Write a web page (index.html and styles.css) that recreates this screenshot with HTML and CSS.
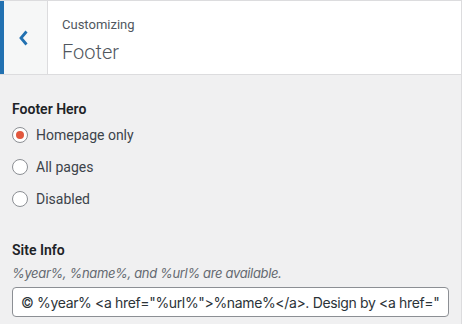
FILE: index.html
```html
<!DOCTYPE html>
<html lang="en">
<head>
    <meta charset="UTF-8">
    <title>Customizing Footer</title>
    <link rel="stylesheet" href="styles.css">
</head>
<body>
    <div class="panel">
        <div class="panel-header">
            <button class="back-btn" aria-label="Back">
                <svg width="10" height="16" viewBox="0 0 10 16"><path d="M7.5 1.5 L2 8 L7.5 14.5" fill="none" stroke="#2271b1" stroke-width="2.8"/></svg>
            </button>
            <div class="title">
                <span class="subtitle">Customizing</span>
                <h3>Footer</h3>
            </div>
        </div>

        <div class="section">
            <div class="control-title">Footer Hero</div>
            <label class="radio-row"><input type="radio" name="hero" checked> Homepage only</label>
            <label class="radio-row"><input type="radio" name="hero"> All pages</label>
            <label class="radio-row"><input type="radio" name="hero"> Disabled</label>
        </div>

        <div class="section site-info">
            <div class="control-title">Site Info</div>
            <p class="description">%year%, %name%, and %url% are available.</p>
            <input class="text-input" type="text" value='© %year% <a href="%url%">%name%</a>. Design by <a href="https://example.com">Studio</a>'>
        </div>
    </div>
</body>
</html>
```

FILE: styles.css
```css
body {
    margin: 0;
    font-family: Roboto, "Liberation Sans", sans-serif;
    background: #f0f0f1;
    color: #1d2327;
}
.panel {
    height: 324px;
    border-right: 1px solid #dcdcde;
    box-sizing: border-box;
    overflow: hidden;
}
.panel-header {
    display: flex;
    height: 75px;
    background: #fff;
    border-top: 1px solid #dcdcde;
    border-bottom: 1px solid #dcdcde;
    box-sizing: border-box;
}
.back-btn {
    width: 48px;
    border: none;
    border-left: 4px solid #2271b1;
    border-right: 1px solid #dcdcde;
    background: #f6f7f7;
    padding: 0 3px 0 0;
    display: flex;
    align-items: center;
    justify-content: center;
    cursor: pointer;
}
.title {
    padding: 14px 0 0 14px;
    color: #50575e;
}
.subtitle {
    display: block;
    font-size: 13px;
    line-height: 20px;
}
.title h3 {
    margin: 4px 0 0;
    font-size: 20px;
    font-weight: 300;
    line-height: 26px;
}
.section {
    padding: 0 12px;
}
.control-title {
    font-size: 14px;
    font-weight: 600;
    color: #1d2327;
    margin-top: 24px;
    line-height: 20px;
}
.radio-row {
    display: flex;
    align-items: center;
    font-size: 14px;
    color: #3c434a;
    height: 32px;
    gap: 8px;
}
.radio-row input {
    appearance: none;
    width: 16px;
    height: 16px;
    margin: 0;
    border: 1px solid #8c8f94;
    border-radius: 50%;
    background: #fff;
    display: flex;
    align-items: center;
    justify-content: center;
}
.radio-row input:checked::before {
    content: "";
    width: 8px;
    height: 8px;
    border-radius: 50%;
    background: #e2583e;
}
.site-info .control-title {
    margin-top: 25px;
}
.description {
    margin: 4px 0 5px;
    font-family: Inter, "Liberation Sans", sans-serif;
    font-size: 13px;
    font-style: italic;
    letter-spacing: -0.35px;
    color: #646970;
    line-height: 18px;
}
.text-input {
    width: 100%;
    box-sizing: border-box;
    height: 30px;
    padding: 0 8px;
    border: 1px solid #8c8f94;
    border-radius: 4px;
    font-family: Inter, "Liberation Sans", sans-serif;
    font-size: 14px;
    letter-spacing: -0.35px;
    color: #2c3338;
    background: #fff;
}
```
